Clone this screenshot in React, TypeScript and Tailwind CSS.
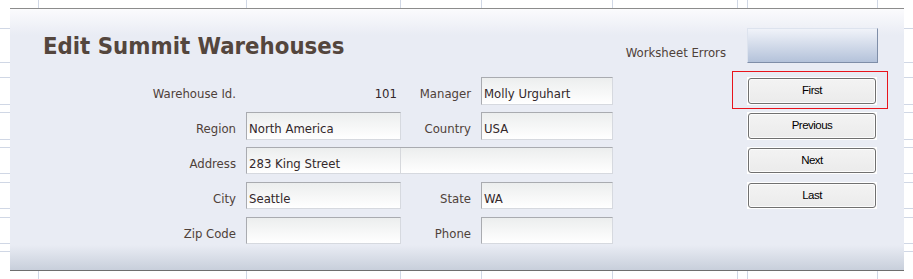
import React from "react";

const GRID = "grid grid-cols-[236px_154px_81px_131px_125px_10px_130px_27px]";
const LBL =
  "font-['DejaVu_Sans_Condensed','DejaVu_Sans',sans-serif] text-[13px] leading-[16px] text-[#4f4139]";
const VAL =
  "font-['DejaVu_Sans_Condensed','DejaVu_Sans',sans-serif] text-[13px] leading-[16px] text-[#33272a]";

function Label({ children }: { children?: React.ReactNode }) {
  return <div className={`${LBL} text-right pr-[10px] pt-[9px] whitespace-nowrap`}>{children}</div>;
}

function Input({ value, h }: { value?: string; h: string }) {
  return (
    <div
      className={`${h} -mr-px border border-t-[#a9abb0] border-l-[#a9abb0] border-r-[#d6d9df] border-b-[#d6d9df] bg-[linear-gradient(180deg,#eceeee,#ffffff)] pl-[2px] pt-[8px] ${VAL} whitespace-nowrap overflow-hidden`}
    >
      {value}
    </div>
  );
}

function Btn({ label }: { label: string }) {
  return (
    <div className="bg-white p-px h-full">
      <div className="h-full rounded-[3px] border border-[#707070] bg-[linear-gradient(180deg,#f3f3f3,#ebebeb)] shadow-[inset_0_0_0_1px_#fcfcfc] flex items-center justify-center font-['Liberation_Sans',Arial,sans-serif] text-[11.5px] tracking-[-0.5px] text-black">
        {label}
      </div>
    </div>
  );
}

function GridLines() {
  const xs = [38, 246, 400, 481, 612, 737, 747, 877];
  const ys = [28, 62, 77, 104, 112, 139, 147, 173, 182, 208, 217, 243, 251];
  return (
    <svg className="absolute inset-0" width={913} height={279}>
      {xs.map((x) => (
        <line key={"x" + x} x1={x + 0.5} y1={0} x2={x + 0.5} y2={279} stroke="#d0d7e5" strokeWidth={1} />
      ))}
      {ys.map((y) => (
        <line key={"y" + y} x1={0} y1={y + 0.5} x2={913} y2={y + 0.5} stroke="#d0d7e5" strokeWidth={1} />
      ))}
    </svg>
  );
}

export default function App() {
  return (
    <div className="relative w-[913px] h-[279px] bg-white overflow-hidden">
      <GridLines />
      <div className="relative mt-[8px] ml-[10px] w-[894px] border-t border-b border-t-[#8c8c8c] border-b-[#6e6e6e] bg-[linear-gradient(180deg,#fbfbfd_0px,#e9ecf4_26px,#e9ecf4_236px,#c8cfdb_261px)]">
        <div className="h-[19px]" />
        {/* header */}
        <div className={`${GRID} h-[34px]`}>
          <div className="col-span-4 pl-[33px] pt-[4px] font-['DejaVu_Sans_Condensed','DejaVu_Sans',sans-serif] font-bold text-[23.7px] leading-[28px] text-[#54463d] whitespace-nowrap">
            Edit Summit Warehouses
          </div>
          <div className={`${LBL} text-right pr-[11px] pt-[17px] whitespace-nowrap`}>Worksheet Errors</div>
          <div />
          <div className="h-[35px] -mr-px border border-t-[#dde3ee] border-l-[#dde3ee] border-r-[#7f8ea8] border-b-[#7f8ea8] bg-[linear-gradient(180deg,#f0f3f9,#b4c2da)]" />
          <div />
        </div>
        <div className="h-[15px]" />
        <div className="flex flex-col">
          {/* row 1 */}
          <div className={`${GRID} h-[27px]`}>
            <Label>Warehouse Id.</Label>
            <div className={`${VAL} text-right pr-[3px] pt-[9px]`}>101</div>
            <Label>Manager</Label>
            <Input value="Molly Urguhart" h="h-[28px]" />
            <div />
            <div />
            <div className="relative">
              <Btn label="First" />
              <div className="absolute left-[-15px] right-[-11px] top-[-6px] bottom-[-4px] border border-[#e8141c] pointer-events-none" />
            </div>
            <div />
          </div>
          <div className="h-[8px]" />
          {/* row 2 */}
          <div className={`${GRID} h-[27px]`}>
            <Label>Region</Label>
            <Input value="North America" h="h-[28px]" />
            <Label>Country</Label>
            <Input value="USA" h="h-[28px]" />
            <div />
            <div />
            <Btn label="Previous" />
            <div />
          </div>
          <div className="h-[8px]" />
          {/* row 3 */}
          <div className={`${GRID} h-[26px]`}>
            <Label>Address</Label>
            <div className="col-span-3 -mr-px h-[27px] flex border border-t-[#a9abb0] border-l-[#a9abb0] border-r-[#d6d9df] border-b-[#d6d9df] bg-[linear-gradient(180deg,#eceeee,#ffffff)]">
              <div className={`w-[153px] pl-[2px] pt-[8px] ${VAL} whitespace-nowrap`}>283 King Street</div>
              <div className="flex-1 border-l border-[#d6d8dc]" />
            </div>
            <div />
            <div />
            <Btn label="Next" />
            <div />
          </div>
          <div className="h-[9px]" />
          {/* row 4 */}
          <div className={`${GRID} h-[26px]`}>
            <Label>City</Label>
            <Input value="Seattle" h="h-[27px]" />
            <Label>State</Label>
            <Input value="WA" h="h-[27px]" />
            <div />
            <div />
            <Btn label="Last" />
            <div />
          </div>
          <div className="h-[9px]" />
          {/* row 5 */}
          <div className={`${GRID} h-[26px]`}>
            <Label>Zip Code</Label>
            <Input h="h-[27px]" />
            <Label>Phone</Label>
            <Input h="h-[27px]" />
            <div />
            <div />
            <div />
            <div />
          </div>
        </div>
        <div className="h-[27px]" />
      </div>
    </div>
  );
}
